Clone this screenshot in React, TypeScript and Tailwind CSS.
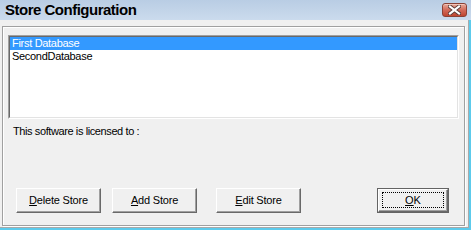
import React from 'react';

const FONT = '"Liberation Sans", Arial, sans-serif';

function CloseButton() {
  return (
    <div className="mt-[3px] mr-[4px] flex h-[14px] w-[25px] items-center justify-center rounded-[3px] border border-[#8a4236] bg-gradient-to-b from-[#e7a99a] via-[#d26a5a] to-[#c0452f] shadow-[inset_0_1px_0_#f2c4b8]">
      <svg width="13" height="10" viewBox="0 0 13 10">
        <path d="M2 1.5 L11 8.5 M11 1.5 L2 8.5" stroke="#5a3a36" strokeWidth="4" strokeLinecap="square" />
        <path d="M2 1.5 L11 8.5 M11 1.5 L2 8.5" stroke="#ffffff" strokeWidth="2.2" strokeLinecap="square" />
      </svg>
    </div>
  );
}

function Btn({ children, width }: { children: React.ReactNode; width: string }) {
  return (
    <div
      className={`flex h-[25px] ${width} items-center justify-center border border-t-white border-l-white border-b-[#696969] border-r-[#696969] bg-[#f0f0f0] text-[11px] tracking-[-0.2px] text-black shadow-[inset_-1px_-1px_0_#a0a0a0]`}
    >
      <span>{children}</span>
    </div>
  );
}

export default function App() {
  return (
    <div className="flex h-[230px] w-[471px] flex-col overflow-hidden bg-[#f0f0f0]" style={{ fontFamily: FONT }}>
      {/* title bar */}
      <div className="flex h-[20px] shrink-0 items-start justify-between bg-gradient-to-b from-[#b9cde4] to-[#cbdbed]">
        <span className="pl-[5px] pt-[1px] text-[15px] font-bold leading-[18px] tracking-[-0.5px] text-black">
          Store Configuration
        </span>
        <CloseButton />
      </div>

      {/* client area */}
      <div className="flex min-h-0 flex-1 border-r-2 border-b-2 border-[#5ccbec]">
        <div className="flex min-h-0 flex-1 border-r border-b border-[#a9a9a9] pt-[6px] pl-[2px] pr-[3px] pb-[1px]">
          <div className="flex flex-1 flex-col border border-[#a0a0a0] shadow-[inset_1px_1px_0_#fff,1px_1px_0_#fff]">
            {/* list box */}
            <div className="mx-[5px] mt-[8px] h-[84px] border border-t-[#a0a0a0] border-l-[#a0a0a0] border-b-white border-r-white">
              <div className="h-full border border-t-[#696969] border-l-[#696969] border-b-[#e3e3e3] border-r-[#e3e3e3] bg-white text-[11px] leading-[13px] tracking-[-0.3px]">
                <div className="h-[13px] bg-[#3399ff] pl-[2px] text-white">First Database</div>
                <div className="h-[13px] pl-[2px] text-black">SecondDatabase</div>
              </div>
            </div>

            <div className="ml-[10px] mt-[6px] text-[11px] leading-[13px] tracking-[-0.4px] text-black">
              This software is licensed to :
            </div>

            {/* buttons */}
            <div className="mt-auto mb-[12px] flex items-end pl-[13px] pr-[15px]">
              <Btn width="w-[85px]">
                <u>D</u>elete Store
              </Btn>
              <div className="ml-[11px]">
                <Btn width="w-[85px]">
                  <u>A</u>dd Store
                </Btn>
              </div>
              <div className="ml-[19px]">
                <Btn width="w-[85px]">
                  <u>E</u>dit Store
                </Btn>
              </div>
              <div className="ml-auto border border-[#646464]">
                <div className="relative flex h-[23px] w-[70px] items-center justify-center border border-t-white border-l-white border-b-[#696969] border-r-[#696969] bg-[#f0f0f0] text-[11px] text-black shadow-[inset_-1px_-1px_0_#a0a0a0]">
                  <div className="absolute inset-x-[3px] top-[2px] bottom-[3px] border border-dotted border-black" />
                  <span>
                    <u>O</u>K
                  </span>
                </div>
              </div>
            </div>
          </div>
        </div>
      </div>
    </div>
  );
}
